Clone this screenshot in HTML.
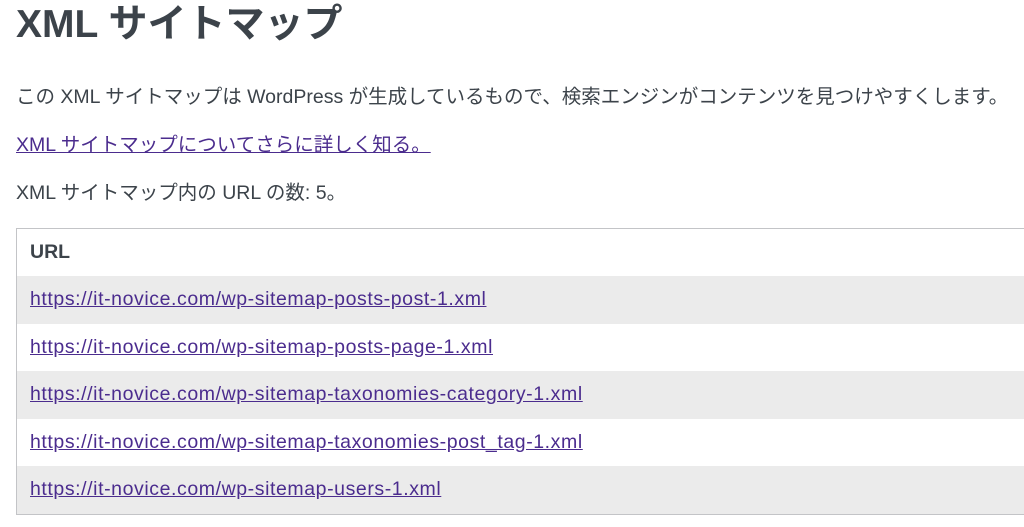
<!DOCTYPE html>
<html><head><meta charset="utf-8"><style>
html,body{margin:0;padding:0;background:#fff;}
body{width:1024px;height:527px;overflow:hidden;position:relative;font-family:"Liberation Sans","Noto Sans CJK JP",sans-serif;color:#3c434a;}
.t{position:absolute;left:16px;white-space:nowrap;}
h1{position:absolute;left:16px;top:2px;margin:0;font-size:39px;line-height:46px;font-weight:bold;color:#3c434a;white-space:nowrap;}
a{color:#4b2c8e;text-decoration:underline;}
.p{font-size:19.5px;line-height:24px;}
table{position:absolute;left:16px;top:228px;width:1030px;border-collapse:collapse;border:1px solid #c3c4c7;font-size:19.5px;}
th{text-align:left;height:47px;padding:0 0 0 13px;font-weight:bold;color:#3c434a;}
td{height:47.5px;padding:0 0 0 13px;letter-spacing:0.58px;}
tr.g td{background:#ebebeb;}
</style></head><body>
<h1>XML サイトマップ</h1>
<div class="t p" style="top:85px">この XML サイトマップは WordPress が生成しているもので、検索エンジンがコンテンツを見つけやすくします。</div>
<div class="t p" style="top:133px"><a>XML サイトマップについてさらに詳しく知る。</a></div>
<div class="t p" style="top:181px">XML サイトマップ内の URL の数: 5。</div>
<table>
<tr><th>URL</th></tr>
<tr class="g"><td><a>https://it-novice.com/wp-sitemap-posts-post-1.xml</a></td></tr>
<tr><td><a>https://it-novice.com/wp-sitemap-posts-page-1.xml</a></td></tr>
<tr class="g"><td><a>https://it-novice.com/wp-sitemap-taxonomies-category-1.xml</a></td></tr>
<tr><td><a>https://it-novice.com/wp-sitemap-taxonomies-post_tag-1.xml</a></td></tr>
<tr class="g"><td><a>https://it-novice.com/wp-sitemap-users-1.xml</a></td></tr>
</table>
</body></html>
